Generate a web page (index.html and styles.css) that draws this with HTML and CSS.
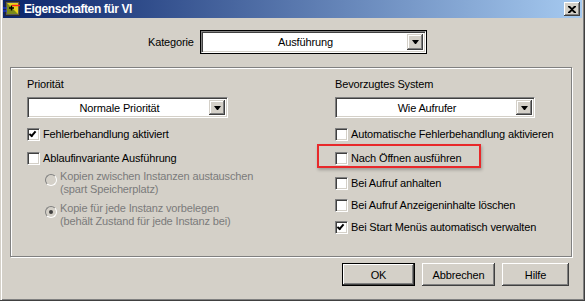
FILE: index.html
```html
<!DOCTYPE html>
<html lang="de">
<head>
    <meta charset="UTF-8">
    <title>Eigenschaften für VI</title>
    <link rel="stylesheet" href="styles.css">
</head>
<body>

<div class="window">
    <div class="titlebar">
        <svg class="app-icon" width="17" height="16" viewBox="0 0 17 16">
            <rect x="2.5" y="0.5" width="14" height="14" fill="#5a5a5a" stroke="#2a2a2a"/>
            <rect x="4" y="2" width="11" height="11" fill="#e8d21c"/>
            <polygon points="4,2 15,13 4,13" fill="#7a8a1a"/>
            <path d="M6 7h5M8.5 4.5v5" stroke="#000" stroke-width="1.4"/>
            <path d="M9 4.5h8" stroke="#ff2020" stroke-width="1.4"/>
            <path d="M0 7h4M0 10h4" stroke="#2040ff" stroke-width="1.2"/>
        </svg>
        <span class="title">Eigenschaften für VI</span>
        <div class="close-btn">
            <svg width="8" height="7" viewBox="0 0 8 7">
                <path d="M0 0h2l2 2 2-2h2v1L5 3.5 8 6v1H6L4 5 2 7H0V6l3-2.5L0 1z" fill="#000"/>
            </svg>
        </div>
    </div>

    <div class="category-row">
        <span class="category-label">Kategorie</span>
        <div class="combo combo-focus">
            <span class="combo-text">Ausführung</span>
            <span class="combo-btn"><i class="arrow"></i></span>
        </div>
    </div>

    <div class="group">
        <div class="col">
            <div class="field-label">Priorität</div>
            <div class="combo combo-small">
                <span class="combo-text">Normale Priorität</span>
                <span class="combo-btn"><i class="arrow"></i></span>
            </div>
            <div class="check first checked"><span class="box"></span>Fehlerbehandlung aktiviert</div>
            <div class="check"><span class="box"></span>Ablaufinvariante Ausführung</div>
            <div class="radio first">
                <span class="dot"></span>
                <span class="radio-text">Kopien zwischen Instanzen austauschen<br>(spart Speicherplatz)</span>
            </div>
            <div class="radio selected">
                <span class="dot"></span>
                <span class="radio-text">Kopie für jede Instanz vorbelegen<br>(behält Zustand für jede Instanz bei)</span>
            </div>
        </div>
        <div class="col">
            <div class="field-label">Bevorzugtes System</div>
            <div class="combo combo-small combo-right">
                <span class="combo-text">Wie Aufrufer</span>
                <span class="combo-btn"><i class="arrow"></i></span>
            </div>
            <div class="check first"><span class="box"></span>Automatische Fehlerbehandlung aktivieren</div>
            <div class="check"><span class="box"></span>Nach Öffnen ausführen</div>
            <div class="check wide"><span class="box"></span>Bei Aufruf anhalten</div>
            <div class="check tight"><span class="box"></span>Bei Aufruf Anzeigeninhalte löschen</div>
            <div class="check tight checked"><span class="box"></span>Bei Start Menüs automatisch verwalten</div>
        </div>
    </div>

    <div class="buttons">
        <div class="btn btn-default">OK</div>
        <div class="btn">Abbrechen</div>
        <div class="btn btn-help">Hilfe</div>
    </div>

    <div class="highlight"></div>
</div>

</body>
</html>
```

FILE: styles.css
```css
body {
    margin: 0;
    background: #d4d0c8;
    font-family: "Liberation Sans", Arial, sans-serif;
    font-size: 11px;
    letter-spacing: -0.15px;
    color: #000;
}
.window {
    position: relative;
    box-sizing: border-box;
    width: 585px;
    height: 301px;
    padding: 0 2px 2px 2px;
    background: #d4d0c8;
    border-right: 1px solid #404040;
    border-bottom: 1px solid #404040;
    box-shadow: inset 1px 0 #d4d0c8, inset 2px 0 #fff, inset -1px -1px #808080;
}
.titlebar {
    display: flex;
    align-items: center;
    height: 18px;
    margin: 0 0 0 1px;
    padding: 0 2px 0 0;
    background: linear-gradient(to right, #0a246a, #a6caf0);
}
.app-icon {
    margin: 0 4px 0 0;
}
.title {
    color: #fff;
    font-weight: bold;
    font-size: 12px;
    letter-spacing: -0.4px;
    flex: 1;
}
.close-btn {
    width: 16px;
    height: 14px;
    display: flex;
    align-items: center;
    justify-content: center;
    background: #d4d0c8;
    box-shadow: inset -1px -1px #404040, inset 1px 1px #fff, inset -2px -2px #808080;
}
.category-row {
    display: flex;
    align-items: center;
    margin-top: 13px;
    padding-left: 146px;
}
.category-label {
    width: 53px;
}
/* Combobox im Windows-Classic-Stil */
.combo {
    display: flex;
    box-sizing: border-box;
    height: 21px;
    background: #fff;
    border: 1px solid;
    border-color: #808080 #fff #fff #808080;
    box-shadow: inset 1px 1px #404040, inset -1px -1px #d4d0c8;
    padding: 2px;
}
.combo-focus {
    width: 225px;
    height: 22px;
    outline: 1px solid #000;
}
.combo-small {
    width: 201px;
    margin-top: 6px;
}
.combo-right {
    width: 200px;
}
.combo-text {
    flex: 1;
    text-align: center;
    line-height: 16px;
}
.combo-btn {
    width: 16px;
    display: flex;
    align-items: center;
    justify-content: center;
    background: #d4d0c8;
    box-shadow: inset -1px -1px #404040, inset 1px 1px #d4d0c8, inset -2px -2px #808080, inset 2px 2px #fff;
}
.arrow {
    width: 1px;
    height: 0;
    border-left: 3px solid transparent;
    border-right: 3px solid transparent;
    border-top: 4px solid #000;
}
.group {
    display: grid;
    grid-template-columns: 308px 1fr;
    box-sizing: border-box;
    width: 562px;
    height: 190px;
    margin: 14px 0 0 8px;
    padding: 10px 0 0 16px;
    border: 1px solid #808080;
    box-shadow: inset 1px 1px #fff, 1px 1px #fff;
}
.field-label {
    line-height: 13px;
}
.check {
    display: flex;
    align-items: center;
    height: 13px;
    line-height: 13px;
    margin-top: 11px;
    white-space: nowrap;
}
.check.first {
    margin-top: 10px;
}
.check.wide {
    margin-top: 12px;
}
.check.tight {
    margin-top: 9px;
}
.box {
    position: relative;
    box-sizing: border-box;
    width: 13px;
    height: 13px;
    margin-right: 3px;
    background: #fff;
    border: 1px solid;
    border-color: #808080 #fff #fff #808080;
    box-shadow: inset 1px 1px #404040, inset -1px -1px #d4d0c8;
}
.checked .box::after {
    content: "";
    position: absolute;
    left: 2px;
    top: 1px;
    width: 2px;
    height: 5px;
    border: solid #000;
    border-width: 0 2px 2px 0;
    transform: rotate(40deg);
    transform-origin: 60% 60%;
}
.radio {
    display: flex;
    align-items: flex-start;
    margin: 6px 0 0 18px;
    color: #7b7b7b;
    line-height: 13px;
}
.radio.first {
    margin-top: 5px;
}
.dot {
    position: relative;
    box-sizing: border-box;
    width: 12px;
    height: 12px;
    margin: 4px 3px 0 0;
    border-radius: 50%;
    background: #d4d0c8;
    border: 1px solid;
    border-color: #808080 #fff #fff #808080;
}
.selected .dot::after {
    content: "";
    position: absolute;
    left: 3px;
    top: 3px;
    width: 4px;
    height: 4px;
    border-radius: 50%;
    background: #404040;
}
.buttons {
    display: flex;
    justify-content: flex-end;
    gap: 7px;
    margin-top: 6px;
    padding-right: 13px;
}
.btn {
    box-sizing: border-box;
    width: 73px;
    height: 23px;
    display: flex;
    align-items: center;
    justify-content: center;
    background: #d4d0c8;
    box-shadow: inset -1px -1px #404040, inset 1px 1px #fff, inset -2px -2px #808080;
}
.btn-help {
    width: 67px;
}
.btn-default {
    border: 1px solid #000;
}
.highlight {
    position: absolute;
    left: 317px;
    top: 144px;
    width: 160px;
    height: 20px;
    border: 2px solid #e8282a;
    box-shadow: 1px 2px 3px rgba(0, 0, 0, 0.25);
}
```
